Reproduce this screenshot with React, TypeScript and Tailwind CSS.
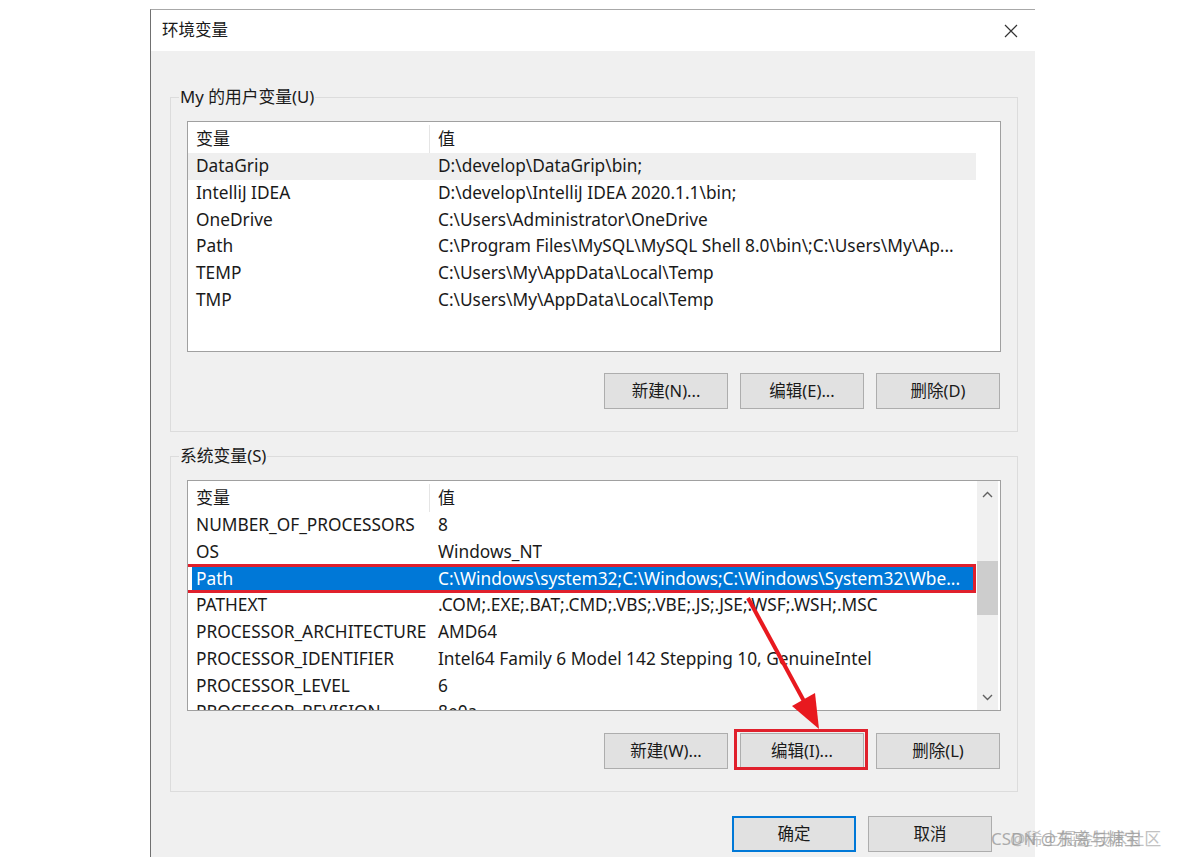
import React from "react";

type Row = [string, string];

const userRows: Row[] = [
  ["DataGrip", "D:\\develop\\DataGrip\\bin;"],
  ["IntelliJ IDEA", "D:\\develop\\IntelliJ IDEA 2020.1.1\\bin;"],
  ["OneDrive", "C:\\Users\\Administrator\\OneDrive"],
  ["Path", "C:\\Program Files\\MySQL\\MySQL Shell 8.0\\bin\\;C:\\Users\\My\\Ap..."],
  ["TEMP", "C:\\Users\\My\\AppData\\Local\\Temp"],
  ["TMP", "C:\\Users\\My\\AppData\\Local\\Temp"],
];

const sysRows: Row[] = [
  ["NUMBER_OF_PROCESSORS", "8"],
  ["OS", "Windows_NT"],
  ["Path", "C:\\Windows\\system32;C:\\Windows;C:\\Windows\\System32\\Wbe..."],
  ["PATHEXT", ".COM;.EXE;.BAT;.CMD;.VBS;.VBE;.JS;.JSE;.WSF;.WSH;.MSC"],
  ["PROCESSOR_ARCHITECTURE", "AMD64"],
  ["PROCESSOR_IDENTIFIER", "Intel64 Family 6 Model 142 Stepping 10, GenuineIntel"],
  ["PROCESSOR_LEVEL", "6"],
  ["PROCESSOR_REVISION", "8e0a"],
];

function Chevron({ up }: { up?: boolean }) {
  return (
    <svg width="11" height="7" viewBox="0 0 11 7">
      <polyline
        points={up ? "1,6 5.5,1.5 10,6" : "1,1 5.5,5.5 10,1"}
        fill="none"
        stroke="#606060"
        strokeWidth="1.4"
      />
    </svg>
  );
}

function ListView({
  rows,
  hover,
  selected,
  scrollbar,
}: {
  rows: Row[];
  hover?: number;
  selected?: number;
  scrollbar?: boolean;
}) {
  return (
    <div className="flex h-[231px] border border-[#a0a0a0] bg-white">
      <div className="flex w-[788px] flex-col overflow-hidden pt-[1px]">
        <div className="flex h-[30px] shrink-0 items-center pt-[2px] text-[17px] text-[#1a1a1a]">
          <div className="w-[242px] border-r border-[#e5e5e5] pl-[8px] leading-[28px]">变量</div>
          <div className="pl-[8px]">值</div>
        </div>
        {rows.map((r, i) => {
          const isSel = i === selected;
          const isHover = i === hover;
          return (
            <div
              key={i}
              className={
                "relative flex h-[26.7px] shrink-0 items-center whitespace-nowrap text-[17.3px] " +
                (isHover ? "bg-[#efefef] text-[#1a1a1a]" : isSel ? "text-white" : "text-[#1a1a1a]")
              }
            >
              {isSel && <div className="absolute inset-y-0 left-[4px] right-0 bg-[#0078d7]" />}
              {isSel && (
                <div className="pointer-events-none absolute left-[-4px] right-0 top-[-1px] bottom-[-1px] border-[3px] border-[#e0202c]" />
              )}
              <div className="relative w-[242px] pl-[8px]">{r[0]}</div>
              <div className="relative overflow-hidden pl-[8px]">{r[1]}</div>
            </div>
          );
        })}
      </div>
      {scrollbar ? (
        <div className="ml-[1px] flex w-[21px] flex-col bg-[#f0f0f0]">
          <div className="flex h-[26px] items-center justify-center">
            <Chevron up />
          </div>
          <div className="flex-1">
            <div className="mt-[54px] h-[54px] bg-[#cdcdcd]" />
          </div>
          <div className="flex h-[26px] items-center justify-center">
            <Chevron />
          </div>
        </div>
      ) : null}
    </div>
  );
}

function Btn({ children, primary }: { children: React.ReactNode; primary?: boolean }) {
  return (
    <div
      className={
        "flex h-[36px] w-[124px] items-center justify-center bg-[#e1e1e1] text-[16.5px] text-[#1a1a1a] " +
        (primary ? "border-2 border-[#0078d7]" : "border border-[#adadad]")
      }
    >
      {children}
    </div>
  );
}

export default function App() {
  return (
    <div className="relative h-[859px] w-[1179px] overflow-hidden bg-white font-['Noto_Sans','Noto_Sans_CJK_SC',sans-serif]">
      <div className="ml-[150px] mt-[9px] flex h-[848px] w-[885px] flex-col border-l border-t border-l-[#707070] border-t-[#a8a8a8]">
        {/* title bar */}
        <div className="flex h-[41px] shrink-0 items-center justify-between bg-white pl-[11px] pr-[17px]">
          <div className="text-[16.5px] text-[#1a1a1a]">环境变量</div>
          <svg width="14" height="14" viewBox="0 0 14 14">
            <path d="M1 1 L13 13 M13 1 L1 13" stroke="#333" strokeWidth="1.2" />
          </svg>
        </div>
        {/* body */}
        <div className="flex flex-1 flex-col bg-[#f0f0f0] pl-[19px] pr-[17px] pt-[36px]">
          <fieldset className="border border-[#dcdcdc] px-[16px] pb-[22px] pt-[14px]">
            <legend className="ml-[-8px] px-[1px] text-[16.8px] leading-[20px] text-[#1a1a1a]">My 的用户变量(U)</legend>
            <ListView rows={userRows} hover={0} />
            <div className="mt-[21px] flex justify-end gap-[12px] pr-[1px]">
              <Btn>新建(N)...</Btn>
              <Btn>编辑(E)...</Btn>
              <Btn>删除(D)</Btn>
            </div>
          </fieldset>
          <fieldset className="mt-[14px] border border-[#dcdcdc] px-[16px] pb-[22px] pt-[14px]">
            <legend className="ml-[-8px] px-[1px] text-[16.8px] leading-[20px] text-[#1a1a1a]">系统变量(S)</legend>
            <ListView rows={sysRows} selected={2} scrollbar />
            <div className="mt-[22px] flex justify-end gap-[12px] pr-[1px]">
              <Btn>新建(W)...</Btn>
              <div className="relative">
                <Btn>编辑(I)...</Btn>
                <div className="pointer-events-none absolute bottom-[-1px] left-[-6px] right-[-4px] top-[-4px] border-[3px] border-[#e0202c]" />
              </div>
              <Btn>删除(L)</Btn>
            </div>
          </fieldset>
          <div className="mt-[24px] flex justify-end gap-[12px] pr-[26px]">
            <Btn primary>确定</Btn>
            <Btn>取消</Btn>
          </div>
        </div>
      </div>

      {/* red arrow annotation */}
      <svg className="pointer-events-none absolute left-0 top-0" width="1179" height="859">
        <line x1="748" y1="598" x2="805" y2="703" stroke="#e8191f" strokeWidth="4" />
        <polygon points="819,729 792,706 815,693" fill="#e8191f" />
      </svg>

      {/* watermark */}
      <div className="pointer-events-none absolute left-[991px] top-[826px] whitespace-nowrap text-[17px] text-[#9a9a9a] opacity-80">
        CSDN @东离与糖宝
      </div>
      <div className="pointer-events-none absolute left-[1010px] top-[826px] whitespace-nowrap text-[17px] text-[#9a9a9a] opacity-60">
        @稀土掘金技术社区
      </div>
    </div>
  );
}
